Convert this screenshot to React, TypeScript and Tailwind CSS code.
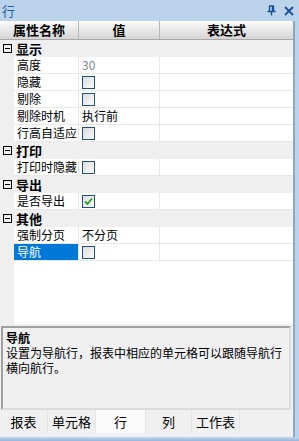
import { Fragment } from 'react';

type Row =
  | { kind: 'cat'; name: string }
  | { kind: 'text'; name: string; value: string; muted?: boolean }
  | { kind: 'check'; name: string; checked?: boolean; selected?: boolean };

const rows: Row[] = [
  { kind: 'cat', name: '显示' },
  { kind: 'text', name: '高度', value: '30', muted: true },
  { kind: 'check', name: '隐藏' },
  { kind: 'check', name: '剔除' },
  { kind: 'text', name: '剔除时机', value: '执行前' },
  { kind: 'check', name: '行高自适应' },
  { kind: 'cat', name: '打印' },
  { kind: 'check', name: '打印时隐藏' },
  { kind: 'cat', name: '导出' },
  { kind: 'check', name: '是否导出', checked: true },
  { kind: 'cat', name: '其他' },
  { kind: 'text', name: '强制分页', value: '不分页' },
  { kind: 'check', name: '导航', selected: true },
];

const tabs = ['报表', '单元格', '行', '列', '工作表'];
const tabWidths = ['w-[48px]', 'w-[48px]', 'w-[50px]', 'w-[46px]', 'w-[48px]'];

const Checkbox = ({ checked }: { checked?: boolean }) => (
  <div className="w-[13px] h-[13px] border border-[#1c5180] bg-gradient-to-br from-[#dcdcdc] to-[#fbfbfb] flex items-center justify-center">
    {checked && (
      <svg width="9" height="9" viewBox="0 0 9 9">
        <path d="M1 4.5 L3.5 7 L8 1.5" stroke="#21a121" strokeWidth="1.8" fill="none" />
      </svg>
    )}
  </div>
);

export default function App() {
  return (
    <div className="w-[299px] h-[441px] bg-[#bcd3ec] flex flex-col text-[12px] leading-[14px] text-black overflow-hidden" style={{ fontFamily: '"Noto Sans CJK SC", "Liberation Sans", sans-serif' }}>
      {/* title bar */}
      <div className="h-[21px] flex items-center justify-between pl-[2px] pr-[5px] shrink-0">
        <span className="text-[#1f5ca6] text-[13px]">行</span>
        <div className="flex items-center gap-[8px]">
          <svg width="9" height="11" viewBox="0 0 9 11">
            <path d="M2 1 H7 M2.5 1 V6 M6.5 1 V6 M5.5 1 V6 M0.5 6.5 H8.5 M4.5 6.5 V10.5" stroke="#1b4f96" strokeWidth="1.4" fill="none" />
          </svg>
          <svg width="10" height="10" viewBox="0 0 10 10">
            <path d="M1 1 L9 9 M9 1 L1 9" stroke="#1b4f96" strokeWidth="1.8" fill="none" />
          </svg>
        </div>
      </div>

      <div className="flex-1 flex min-h-0">
        <div className="w-[295px] flex flex-col bg-[#f0f0f0] border-r-2 border-[#8fa5c2]">
          {/* grid header */}
          <div className="h-[19px] flex bg-gradient-to-b from-[#fcfcfc] to-[#d5d5d5] border-b border-[#a9a9a9] font-bold text-[13px] shrink-0">
            <div className="w-[79px] flex items-center justify-center border-r border-[#b8b8b8]">属性名称</div>
            <div className="w-[81px] flex items-center justify-center border-r border-[#b8b8b8]">值</div>
            <div className="flex-1 flex items-center justify-center">表达式</div>
          </div>

          {/* grid body */}
          <div className="h-[284px] flex flex-col bg-[#efefef] shrink-0">
            {rows.map((r, i) => (
              <Fragment key={i}>
                {r.kind === 'cat' ? (
                  <div className="h-[17px] flex items-center bg-[#efefef] font-bold text-[13px]">
                    <div className="w-[14px] flex items-center justify-center">
                      <div className="w-[9px] h-[9px] border border-black flex items-center justify-center">
                        <div className="w-[5px] h-px bg-black" />
                      </div>
                    </div>
                    <span className="pl-[2px]">{r.name}</span>
                  </div>
                ) : (
                  <div className="h-[17px] flex">
                    <div className="w-[14px] bg-[#efefef]" />
                    <div className="flex-1 flex border-b border-[#e8e8e8] bg-white">
                      <div className={`w-[65px] flex items-center pl-[3px] border-r border-[#e8e8e8] whitespace-nowrap ${r.kind === 'check' && r.selected ? 'bg-[#0078d7] text-white' : ''}`}>
                        {r.name}
                      </div>
                      <div className="w-[81px] flex items-center pl-[3px] border-r border-[#e8e8e8]">
                        {r.kind === 'text' ? (
                          <span className={r.muted ? 'text-[#7a8799]' : ''}>{r.value}</span>
                        ) : (
                          <Checkbox checked={r.checked} />
                        )}
                      </div>
                      <div className="flex-1" />
                    </div>
                  </div>
                )}
              </Fragment>
            ))}
            <div className="flex-1 flex">
              <div className="w-[14px]" />
              <div className="flex-1 bg-white" />
            </div>
          </div>

          {/* description */}
          <div className="h-[84px] ml-[1px] mt-[2px] mr-[2px] border-2 border-t-[#a0a0a0] border-l-[#a0a0a0] border-b-[#dcdcdc] border-r-[#dcdcdc] bg-[#f0f0f0] px-[3px] pt-[2px] leading-[15px] shrink-0">
            <div className="font-bold">导航</div>
            <div>设置为导航行，报表中相应的单元格可以跟随导航行横向航行。</div>
          </div>

          {/* tabs */}
          <div className="flex-1 flex items-stretch pb-[4px] bg-[#f0f0f0] text-[13px]">
            {tabs.map((t, i) => (
              <div key={t} className={`${tabWidths[i]} flex items-center justify-center border-r border-[#e4e4e4] ${t === '行' ? 'bg-[#fafafa]' : ''}`}>
                {t}
              </div>
            ))}
          </div>
        </div>
      </div>
      <div className="h-[4px] bg-gradient-to-b from-[#c6d7ec] to-[#98b4d8] shrink-0" />
    </div>
  );
}
